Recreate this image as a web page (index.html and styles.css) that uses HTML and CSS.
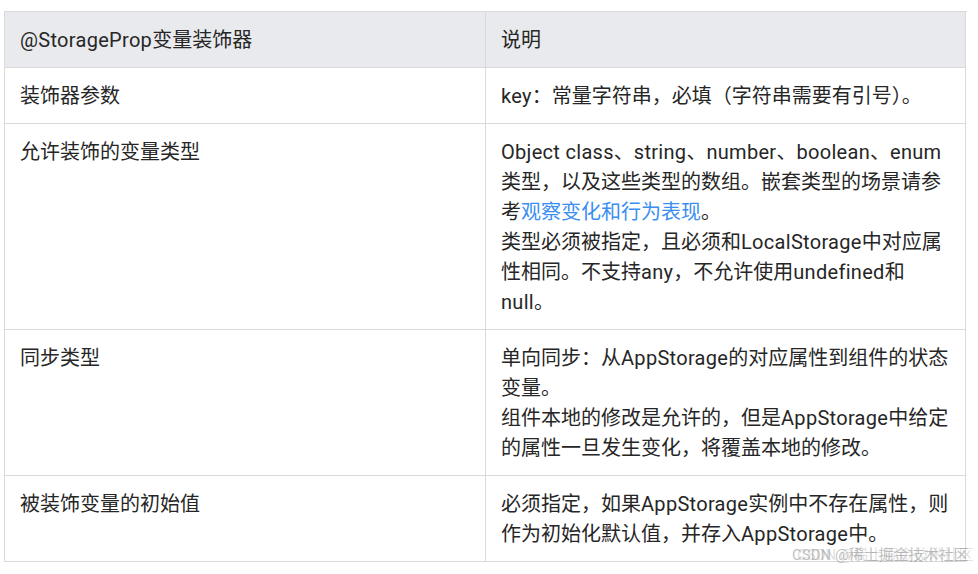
FILE: index.html
```html
<!DOCTYPE html>
<html lang="zh-CN">
<head>
<meta charset="utf-8">
<title>@StorageProp</title>
<link rel="stylesheet" href="styles.css">
</head>
<body>
<div class="page">
  <div class="table">
    <div class="cell head"><span class="en">@StorageProp</span>变量装饰器</div>
    <div class="cell head">说明</div>

    <div class="cell">装饰器参数</div>
    <div class="cell"><span class="en">key</span>：常量字符串，必填（字符串需要有引号）。</div>

    <div class="cell">允许装饰的变量类型</div>
    <div class="cell">
      <p><span class="en">Object class</span>、<span class="en">string</span>、<span class="en">number</span>、<span class="en">boolean</span>、<span class="en">enum</span>类型，以及这些类型的数组。嵌套类型的场景请参考<a class="link" href="#">观察变化和行为表现</a>。</p>
      <p>类型必须被指定，且必须和<span class="en">LocalStorage</span>中对应属性相同。不支持<span class="en">any</span>，不允许使用<span class="en">undefined</span>和<span class="en">null</span>。</p>
    </div>

    <div class="cell">同步类型</div>
    <div class="cell">
      <p>单向同步：从<span class="en">AppStorage</span>的对应属性到组件的状态变量。</p>
      <p>组件本地的修改是允许的，但是<span class="en">AppStorage</span>中给定的属性一旦发生变化，将覆盖本地的修改。</p>
    </div>

    <div class="cell">被装饰变量的初始值</div>
    <div class="cell">必须指定，如果<span class="en">AppStorage</span>实例中不存在属性，则作为初始化默认值，并存入<span class="en">AppStorage</span>中。</div>
  </div>
  <div class="watermark">CSDN @稀土掘金技术社区</div>
</div>
</body>
</html>
```
FILE: styles.css
```css
html, body {
  margin: 0;
  padding: 0;
  background: #ffffff;
}

.page {
  position: relative;
  width: 978px;
  height: 574px;
  padding: 11px 0 0 4px;
  box-sizing: border-box;
  font-family: Roboto, "Noto Sans CJK SC", sans-serif;
  font-size: 20px;
  line-height: 30px;
  color: #262626;
}

.table {
  display: grid;
  grid-template-columns: 481px 480px;
  width: 962px;
  border-top: 1px solid #dadada;
  border-left: 1px solid #dadada;
}

.cell {
  padding: 13px 15px 12px 15px;
  border-right: 1px solid #dadada;
  border-bottom: 1px solid #dadada;
  box-sizing: border-box;
}

.cell p {
  margin: 0;
}

.en {
  letter-spacing: 0.3px;
}

.head {
  background: #e9eaed;
}

.link {
  color: #3a8ef0;
  text-decoration: none;
}

.watermark {
  position: absolute;
  left: 792px;
  top: 544px;
  font-size: 15px;
  line-height: 22px;
  color: rgba(140, 140, 140, 0.55);
  text-shadow: 5px 0 0 rgba(150, 150, 150, 0.3);
  white-space: nowrap;
}
```
